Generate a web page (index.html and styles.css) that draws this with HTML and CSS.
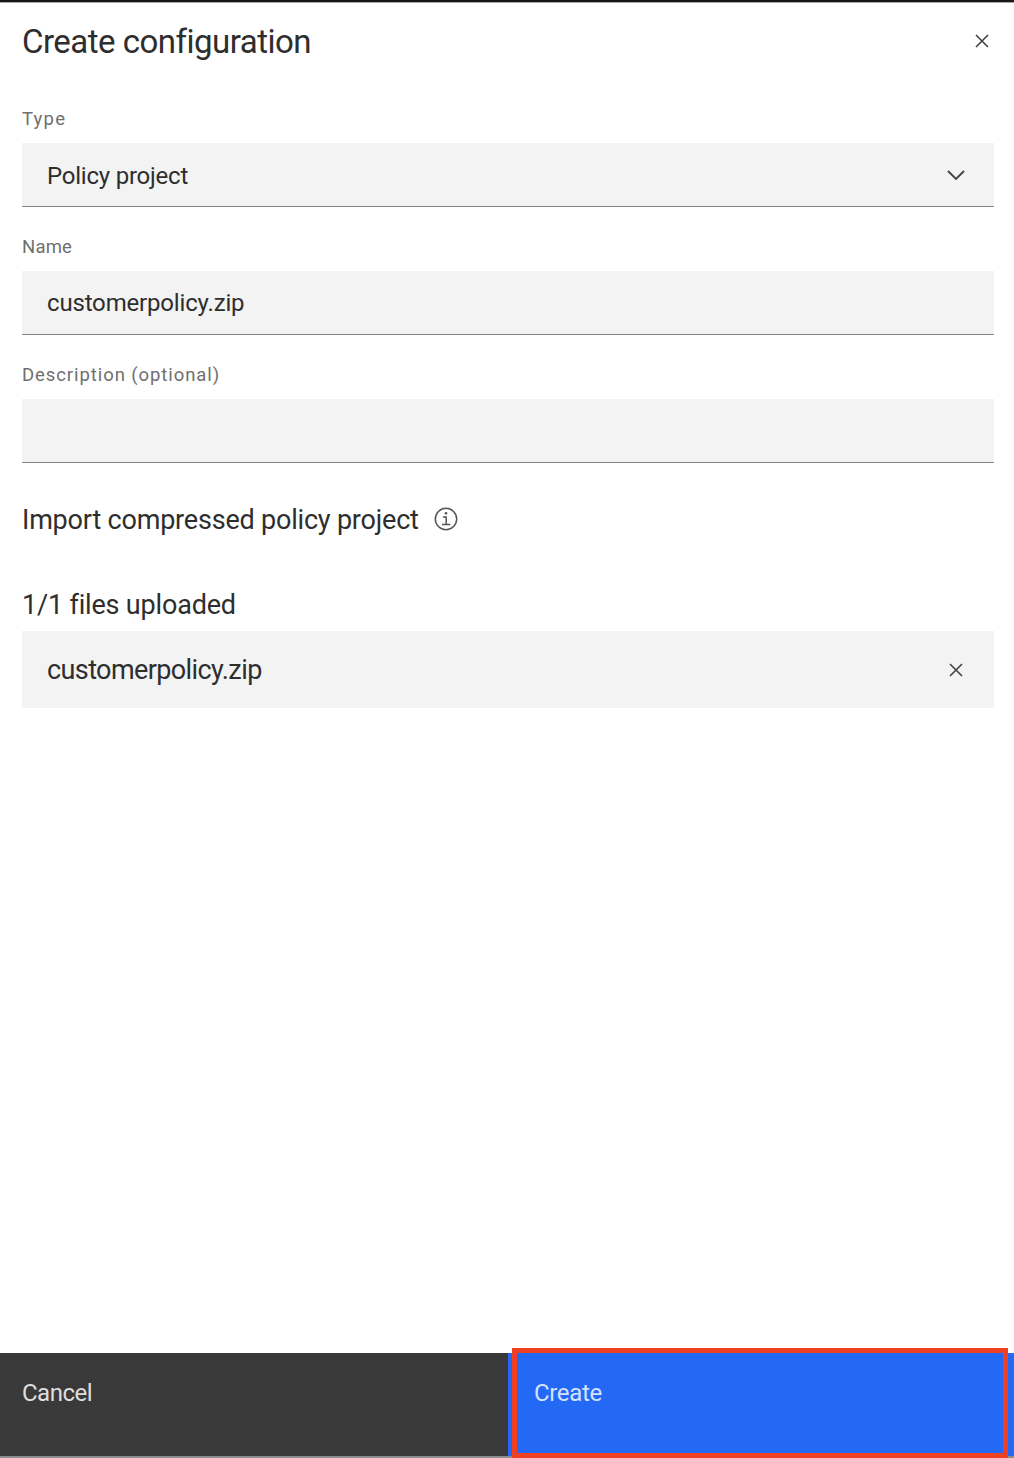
FILE: index.html
```html
<!DOCTYPE html>
<html lang="en">
<head>
<meta charset="utf-8">
<title>Create configuration</title>
<link rel="stylesheet" href="styles.css">
</head>
<body>
<main class="panel">
  <header class="header">
    <h1 class="title">Create configuration</h1>
    <button class="icon-button header-close" aria-label="Close"><svg class="close" viewBox="0 0 14 14"><path d="M1 1 13 13M13 1 1 13"/></svg></button>
  </header>
  <form class="form">
    <div class="field">
      <label class="label type-label">Type</label>
      <div class="control"><span>Policy project</span><svg class="chevron" viewBox="0 0 18 10"><path d="M1 1 9 9 17 1"/></svg></div>
    </div>
    <div class="field">
      <label class="label name-label">Name</label>
      <div class="control name-control"><span>customerpolicy.zip</span></div>
    </div>
    <div class="field">
      <label class="label">Description (optional)</label>
      <div class="control"></div>
    </div>
    <div class="import"><span>Import compressed policy project</span><svg class="info" viewBox="0 0 24 24"><circle cx="12" cy="12" r="10.7"/><path d="M9 10.1h3.2v7.5M8 17.6h8.3"/><circle class="dot" cx="12" cy="6.3" r="1.3"/></svg></div>
    <div class="uploaded">1/1 files uploaded</div>
    <div class="file"><span>customerpolicy.zip</span><button type="button" class="icon-button" aria-label="Remove file"><svg class="close" viewBox="0 0 14 14"><path d="M1 1 13 13M13 1 1 13"/></svg></button></div>
  </form>
  <footer class="actions">
    <button class="action cancel">Cancel</button>
    <button class="action create">Create</button>
  </footer>
</main>
</body>
</html>
```
FILE: styles.css
```css
*, *::after { box-sizing: border-box; }
body { margin: 0; background: #fff; color: #2e2e2e; font-family: Roboto, "Liberation Sans", sans-serif; }
.panel { display: flex; flex-direction: column; height: 1458px; border-top: 2px solid #161616; box-shadow: inset 0 1px #a8a8a8; white-space: nowrap; }
.header { display: flex; justify-content: space-between; align-items: center; height: 80px; padding: 0 25.5px 0 22px; }
.title { margin: 0; font-size: 33px; font-weight: 400; line-height: 40px; letter-spacing: -.51px; }
.icon-button { display: flex; padding: 0; border: 0; background: none; }
.header-close { margin-bottom: 2px; }
svg { fill: none; stroke: #424242; stroke-width: 1.6; }
.close { width: 14px; height: 14px; }
.form { padding: 20px 20px 0 22px; }
.field { height: 128px; }
.label { display: block; height: 41px; line-height: 35px; font-size: 18.5px; color: #6f6f6f; letter-spacing: .92px; }
.type-label { letter-spacing: 1.2px; }
.name-label { letter-spacing: .2px; }
.control { display: flex; align-items: center; justify-content: space-between; height: 64px; padding: 3px 29px 0 25px; border-bottom: 1px solid #858585; background: #f3f3f3; font-size: 24px; letter-spacing: -.22px; }
.name-control { padding-top: 0; letter-spacing: -.17px; }
.chevron { width: 18px; height: 10px; margin-top: -2px; stroke-width: 1.8; }
.import { display: flex; align-items: center; gap: 15px; height: 68px; font-size: 27px; letter-spacing: -.2px; }
.info { width: 24px; height: 24px; margin-bottom: 2px; stroke: #555; stroke-width: 1.5; }
.info .dot { fill: #555; stroke: none; }
.uploaded { margin-top: 21px; height: 56px; line-height: 60px; font-size: 27px; letter-spacing: -.18px; }
.file { display: flex; align-items: center; justify-content: space-between; height: 77px; padding: 0 31px 0 25px; background: #f3f3f3; font-size: 27px; letter-spacing: -.6px; }
.actions { display: flex; height: 105px; margin-top: auto; border-bottom: 2px solid #8d8d8d; }
.action { display: flex; align-items: flex-start; padding: 25px 22px; border: 0; font: 24px/30px Roboto, "Liberation Sans", sans-serif; letter-spacing: -.5px; color: #dedede; }
.cancel { width: 508px; background: #393939; }
.create { position: relative; flex: 1; padding-left: 26px; background: #2468f6; color: #d5e2ff; letter-spacing: -.35px; }
/* Highlight frame overlapping the edges of the primary action */
.create::after { content: ""; position: absolute; left: 4px; top: -5px; width: 496px; height: 110px; border: 5px solid #ef4023; }
```
